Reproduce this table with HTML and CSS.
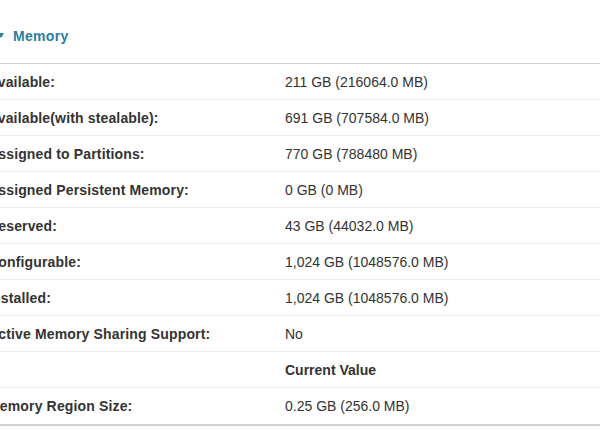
FILE: index.html
```html
<!DOCTYPE html>
<html>
<head>
<meta charset="utf-8">
<link rel="stylesheet" href="styles.css">
</head>
<body>
<div class="panel">
  <div class="panel-header">
    <span class="caret"></span>
    <span class="title">Memory</span>
  </div>
  <div class="props">
    <div class="row"><div class="label">Available:</div><div class="value">211 GB (216064.0 MB)</div></div>
    <div class="row"><div class="label">Available(with stealable):</div><div class="value">691 GB (707584.0 MB)</div></div>
    <div class="row"><div class="label">Assigned to Partitions:</div><div class="value">770 GB (788480 MB)</div></div>
    <div class="row"><div class="label">Assigned Persistent Memory:</div><div class="value">0 GB (0 MB)</div></div>
    <div class="row"><div class="label">Reserved:</div><div class="value">43 GB (44032.0 MB)</div></div>
    <div class="row"><div class="label">Configurable:</div><div class="value">1,024 GB (1048576.0 MB)</div></div>
    <div class="row"><div class="label">Installed:</div><div class="value">1,024 GB (1048576.0 MB)</div></div>
    <div class="row"><div class="label">Active Memory Sharing Support:</div><div class="value">No</div></div>
    <div class="row"><div class="label"></div><div class="value head">Current Value</div></div>
    <div class="row last"><div class="label">Memory Region Size:</div><div class="value">0.25 GB (256.0 MB)</div></div>
  </div>
</div>
</body>
</html>
```
FILE: styles.css
```css
html, body {
  margin: 0;
  padding: 0;
  background: #ffffff;
  overflow: hidden;
}
body {
  font-family: "Liberation Sans", Arial, sans-serif;
  font-size: 14px;
  color: #333333;
}
.panel {
  margin-left: -12px;
  width: 640px;
}
.panel-header {
  display: flex;
  align-items: center;
  padding-left: 10px;
  border-bottom: 1px solid #cfcfcf;
  box-sizing: border-box;
  height: 64px;
  padding-top: 8px;
}
.caret {
  width: 0;
  height: 0;
  border-left: 3px solid transparent;
  border-right: 3px solid transparent;
  border-top: 5px solid #2b7ea1;
  margin-right: 9px;
}
.title {
  font-weight: bold;
  color: #2b7ea1;
  font-size: 14px;
  letter-spacing: 0.3px;
}
.row {
  display: grid;
  grid-template-columns: 297px 1fr;
  height: 36px;
  align-items: center;
  border-bottom: 1px solid #ececec;
  box-sizing: border-box;
}
.row.last {
  height: 38px;
  border-bottom: 2px solid #cfcfcf;
}
.label {
  font-weight: bold;
  color: #333333;
  letter-spacing: 0.15px;
}
.value {
  color: #333333;
}
.value.head {
  font-weight: bold;
}
```
